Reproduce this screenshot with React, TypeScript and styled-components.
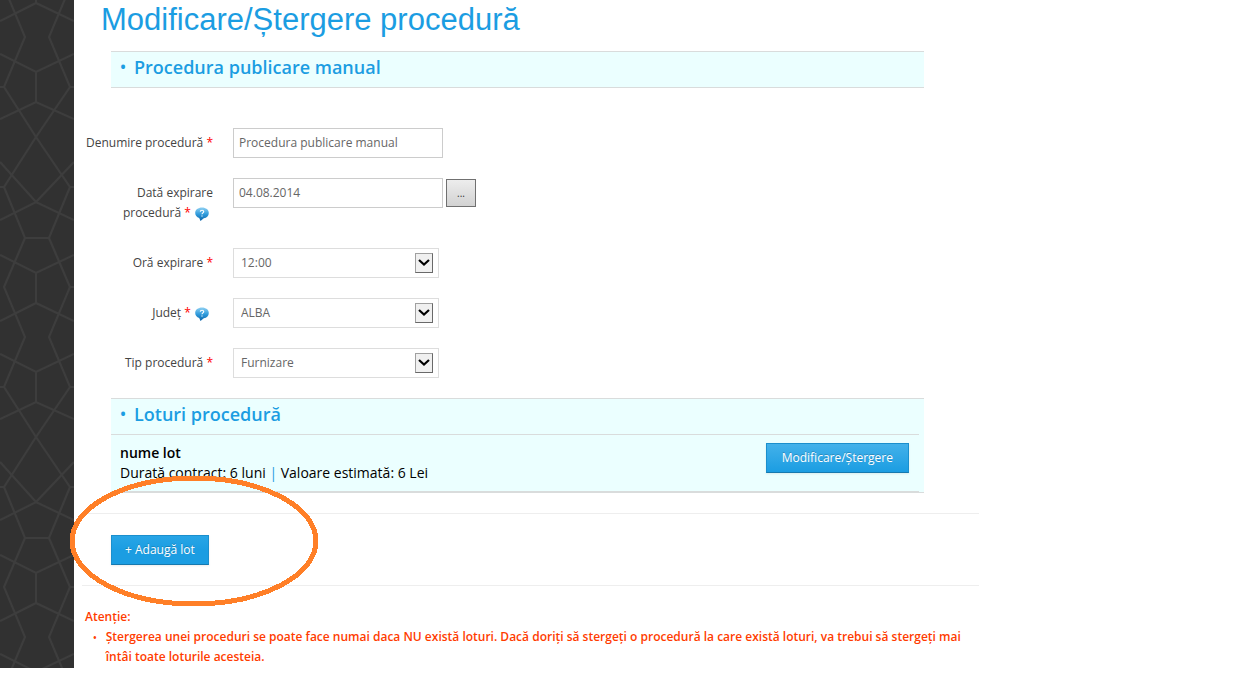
import React from "react";
import styled, { createGlobalStyle } from "styled-components";

const GlobalStyle = createGlobalStyle`
  *, *::before, *::after { box-sizing: border-box; }
  body {
    margin: 0;
    background: #fff;
    color: #444;
    font: 12px/20px "Open Sans", "Noto Sans", sans-serif;
  }
`;

const Page = styled.div`
  display: flex;
`;

const Sidebar = styled.aside`
  flex: 0 0 74px;
  display: flex;
  background: #313131;
`;

const SidebarPattern = styled.svg`
  width: 100%;
  height: 100%;
`;

const Main = styled.main`
  flex: 1;
  min-width: 0;
  max-width: 913px;
  padding: 0 8px 1px;
`;

const Title = styled.h1`
  margin: 0 0 11px;
  padding-left: 19px;
  font: 31px/40px "Liberation Sans", Arial, sans-serif;
  color: #1b9de2;
`;

const Panel = styled.section`
  margin: 0 55px 0 29px;
  background: #ebffff;
  border: solid #d9dcdc;
  border-width: 1px 0;
`;

const PanelTitle = styled.h2`
  display: flex;
  gap: 8px;
  margin: 0;
  padding: 0 9px 5px;
  font-size: 18px;
  line-height: 30px;
  font-weight: 600;
  color: #1b9de2;

  &::before {
    content: "•";
    font-size: 16px;
  }
`;

const Form = styled.form`
  display: grid;
  gap: 20px;
  padding: 40px 0 20px;
`;

const FieldRow = styled.div`
  display: grid;
  grid-template-columns: 131px 1fr;
  column-gap: 20px;
`;

const Label = styled.label`
  padding: 5px 0;
  text-align: right;
`;

const Required = styled.span`
  color: #f00;
`;

const HelpIcon = styled.svg`
  width: 14px;
  height: 14px;
  margin: 0 4px 0 1px;
  vertical-align: -4px;
`;

const Controls = styled.div`
  display: flex;
  align-items: flex-start;
  gap: 3px;
`;

const TextInput = styled.input`
  width: 210px;
  height: 30px;
  padding: 0 5px 2px;
  border: 1px solid #ccc;
  background: #fff;
  color: #666;
  font: inherit;
`;

const PickerButton = styled.button`
  width: 30px;
  height: 28px;
  margin-top: 1px;
  padding: 0;
  border: 1px solid #707070;
  background: linear-gradient(#ededed, #d2d2d2);
  color: #333;
  font: inherit;
  font-size: 10px;
`;

const SelectBox = styled.div`
  position: relative;
  width: 206px;
`;

const Select = styled.select`
  appearance: none;
  display: block;
  width: 100%;
  height: 30px;
  padding: 0 28px 0 7px;
  border: 1px solid #ddd;
  border-radius: 0;
  background: #fff;
  color: #666;
  font: inherit;
`;

const SelectArrow = styled.svg`
  position: absolute;
  top: 5px;
  right: 6px;
  width: 18px;
  height: 20px;
  border: 1px solid #a0a0a0;
  border-right-color: #696969;
  border-bottom-color: #696969;
  background: #f0f0f0;
  pointer-events: none;
`;

const Lot = styled.div`
  display: flex;
  justify-content: space-between;
  align-items: flex-start;
  margin-right: 5px;
  padding: 8px 10px 8px 9px;
  border: solid #d9dcdc;
  border-width: 1px 0;
  color: #000;
  font-size: 14px;
`;

const LotInfo = styled.p`
  margin: 0;
`;

const LotName = styled.strong`
  display: block;
  font-weight: 600;
`;

const Separator = styled.span`
  color: #1b9de2;
`;

const PrimaryButton = styled.button<{ $flat?: boolean }>`
  height: 30px;
  padding: 0 ${(p) => (p.$flat ? 13 : 15)}px;
  border: 1px solid #1b8fcd;
  border-bottom-color: #1779ae;
  background: ${(p) =>
    p.$flat ? "linear-gradient(#28a5e6, #1b9de2 50%)" : "linear-gradient(#43b1ea, #1b9de2)"};
  box-shadow: 0 1px 2px rgba(0, 0, 0, 0.08);
  color: #fff;
  font: inherit;
  font-size: 12px;
  text-shadow: 0 -1px 0 rgba(0, 0, 0, 0.2);
`;

const Actions = styled.div`
  position: relative;
  margin-top: 20px;
  padding: 21px 29px 20px;
  border: solid #eee;
  border-width: 1px 0;
`;

const Highlight = styled.svg`
  position: absolute;
  top: -39px;
  left: -13px;
  width: 250px;
  height: 132px;
  pointer-events: none;
`;

const Warning = styled.section`
  padding: 21px 3px 0;
  color: #ff3c00;
  font-weight: 600;
`;

const WarningTitle = styled.p`
  margin: 0;
`;

const WarningList = styled.ul`
  margin: 0;
  padding: 0;
  list-style: none;
`;

const WarningItem = styled.li`
  display: flex;
  gap: 9px;
  padding-left: 8px;

  &::before {
    content: "•";
    font-size: 10px;
  }
`;

const patternLines =
  "M36 3L0 21M36 3L74 21M4 -13L25 37L4 87H0M70 -13L49 37L70 87H74" +
  "M0 54L36 72L74 54M36 72V102M0 119L36 102L74 119M4 87L36 137L70 187H74M70 87L36 137L4 187H0" +
  "M0 162L36 202L74 162M0 220L36 202L74 220M4 187L25 238H49L70 187" +
  "M25 238L4 287L25 337M49 238L70 287L49 337M70 287H74M0 255L36 273L74 255M36 273V303M36 -27V3";

const Help = () => (
  <HelpIcon viewBox="0 0 14 14" role="img" aria-label="Ajutor">
    <defs>
      <linearGradient id="bubble" x1="0" y1="0" x2="0" y2="1">
        <stop offset="0" stopColor="#8fd0f2" />
        <stop offset="0.5" stopColor="#2f9bdc" />
        <stop offset="1" stopColor="#0d62a6" />
      </linearGradient>
    </defs>
    <path
      d="M7 .5C3 .5 .2 2.800 .2 6C.2 8.400 1.800 10.200 4.200 11L5.500 14L8.800 11.300C11.900 10.800 13.800 8.700 13.800 6C13.800 2.800 11 .5 7 .5Z"
      fill="url(#bubble)"
    />
    <path
      d="M5.300 4.600C5.400 2.800 8.800 2.800 8.700 4.700C8.600 5.900 7 5.900 7 7.300M7 8.500V9.600"
      fill="none"
      stroke="#fff"
      strokeWidth="1.200"
    />
  </HelpIcon>
);

type FieldProps = {
  id: string;
  label: string;
  help?: boolean;
  children: React.ReactNode;
};

const Field = ({ id, label, help, children }: FieldProps) => (
  <FieldRow>
    <Label htmlFor={id}>
      {label} <Required>*</Required>
      {help && (
        <>
          {" "}
          <Help />
        </>
      )}
    </Label>
    <Controls>{children}</Controls>
  </FieldRow>
);

const SelectField = ({ id, option }: { id: string; option: string }) => (
  <SelectBox>
    <Select id={id} defaultValue={option}>
      <option>{option}</option>
    </Select>
    <SelectArrow viewBox="0 0 16 18" aria-hidden="true">
      <path d="M3 6L8 10.500L13 6" fill="none" stroke="#000" strokeWidth="2.200" />
    </SelectArrow>
  </SelectBox>
);

export default function App() {
  return (
    <Page>
      <GlobalStyle />
      <Sidebar>
        <SidebarPattern aria-hidden="true">
          <defs>
            <pattern id="lattice" width="74" height="300" patternUnits="userSpaceOnUse">
              <path d={patternLines} fill="none" stroke="#3d3d3d" strokeWidth="2" />
            </pattern>
          </defs>
          <rect width="100%" height="100%" fill="url(#lattice)" />
        </SidebarPattern>
      </Sidebar>
      <Main>
        <Title>Modificare/Ștergere procedură</Title>
        <Panel>
          <PanelTitle>Procedura publicare manual</PanelTitle>
        </Panel>
        <Form onSubmit={(e) => e.preventDefault()}>
          <Field id="name" label="Denumire procedură">
            <TextInput id="name" defaultValue="Procedura publicare manual" />
          </Field>
          <Field id="date" label="Dată expirare procedură" help>
            <TextInput id="date" defaultValue="04.08.2014" />
            <PickerButton type="button" aria-label="Alege data">...</PickerButton>
          </Field>
          <Field id="hour" label="Oră expirare">
            <SelectField id="hour" option="12:00" />
          </Field>
          <Field id="county" label="Județ" help>
            <SelectField id="county" option="ALBA" />
          </Field>
          <Field id="type" label="Tip procedură">
            <SelectField id="type" option="Furnizare" />
          </Field>
        </Form>
        <Panel>
          <PanelTitle>Loturi procedură</PanelTitle>
          <Lot>
            <LotInfo>
              <LotName>nume lot</LotName>
              Durată contract: 6 luni <Separator>|</Separator> Valoare estimată: 6 Lei
            </LotInfo>
            <PrimaryButton type="button">Modificare/Ștergere</PrimaryButton>
          </Lot>
        </Panel>
        <Actions>
          <PrimaryButton type="button" $flat>+ Adaugă lot</PrimaryButton>
          <Highlight viewBox="0 0 250 132" aria-hidden="true">
            <ellipse
              cx="125"
              cy="66"
              rx="122"
              ry="63"
              fill="none"
              stroke="#ff7f27"
              strokeWidth="5"
              shapeRendering="crispEdges"
            />
          </Highlight>
        </Actions>
        <Warning>
          <WarningTitle>Atenție:</WarningTitle>
          <WarningList>
            <WarningItem>
              Ștergerea unei proceduri se poate face numai daca NU există loturi. Dacă doriți să
              stergeți o procedură la care există loturi, va trebui să stergeți mai întâi toate
              loturile acesteia.
            </WarningItem>
          </WarningList>
        </Warning>
      </Main>
    </Page>
  );
}
